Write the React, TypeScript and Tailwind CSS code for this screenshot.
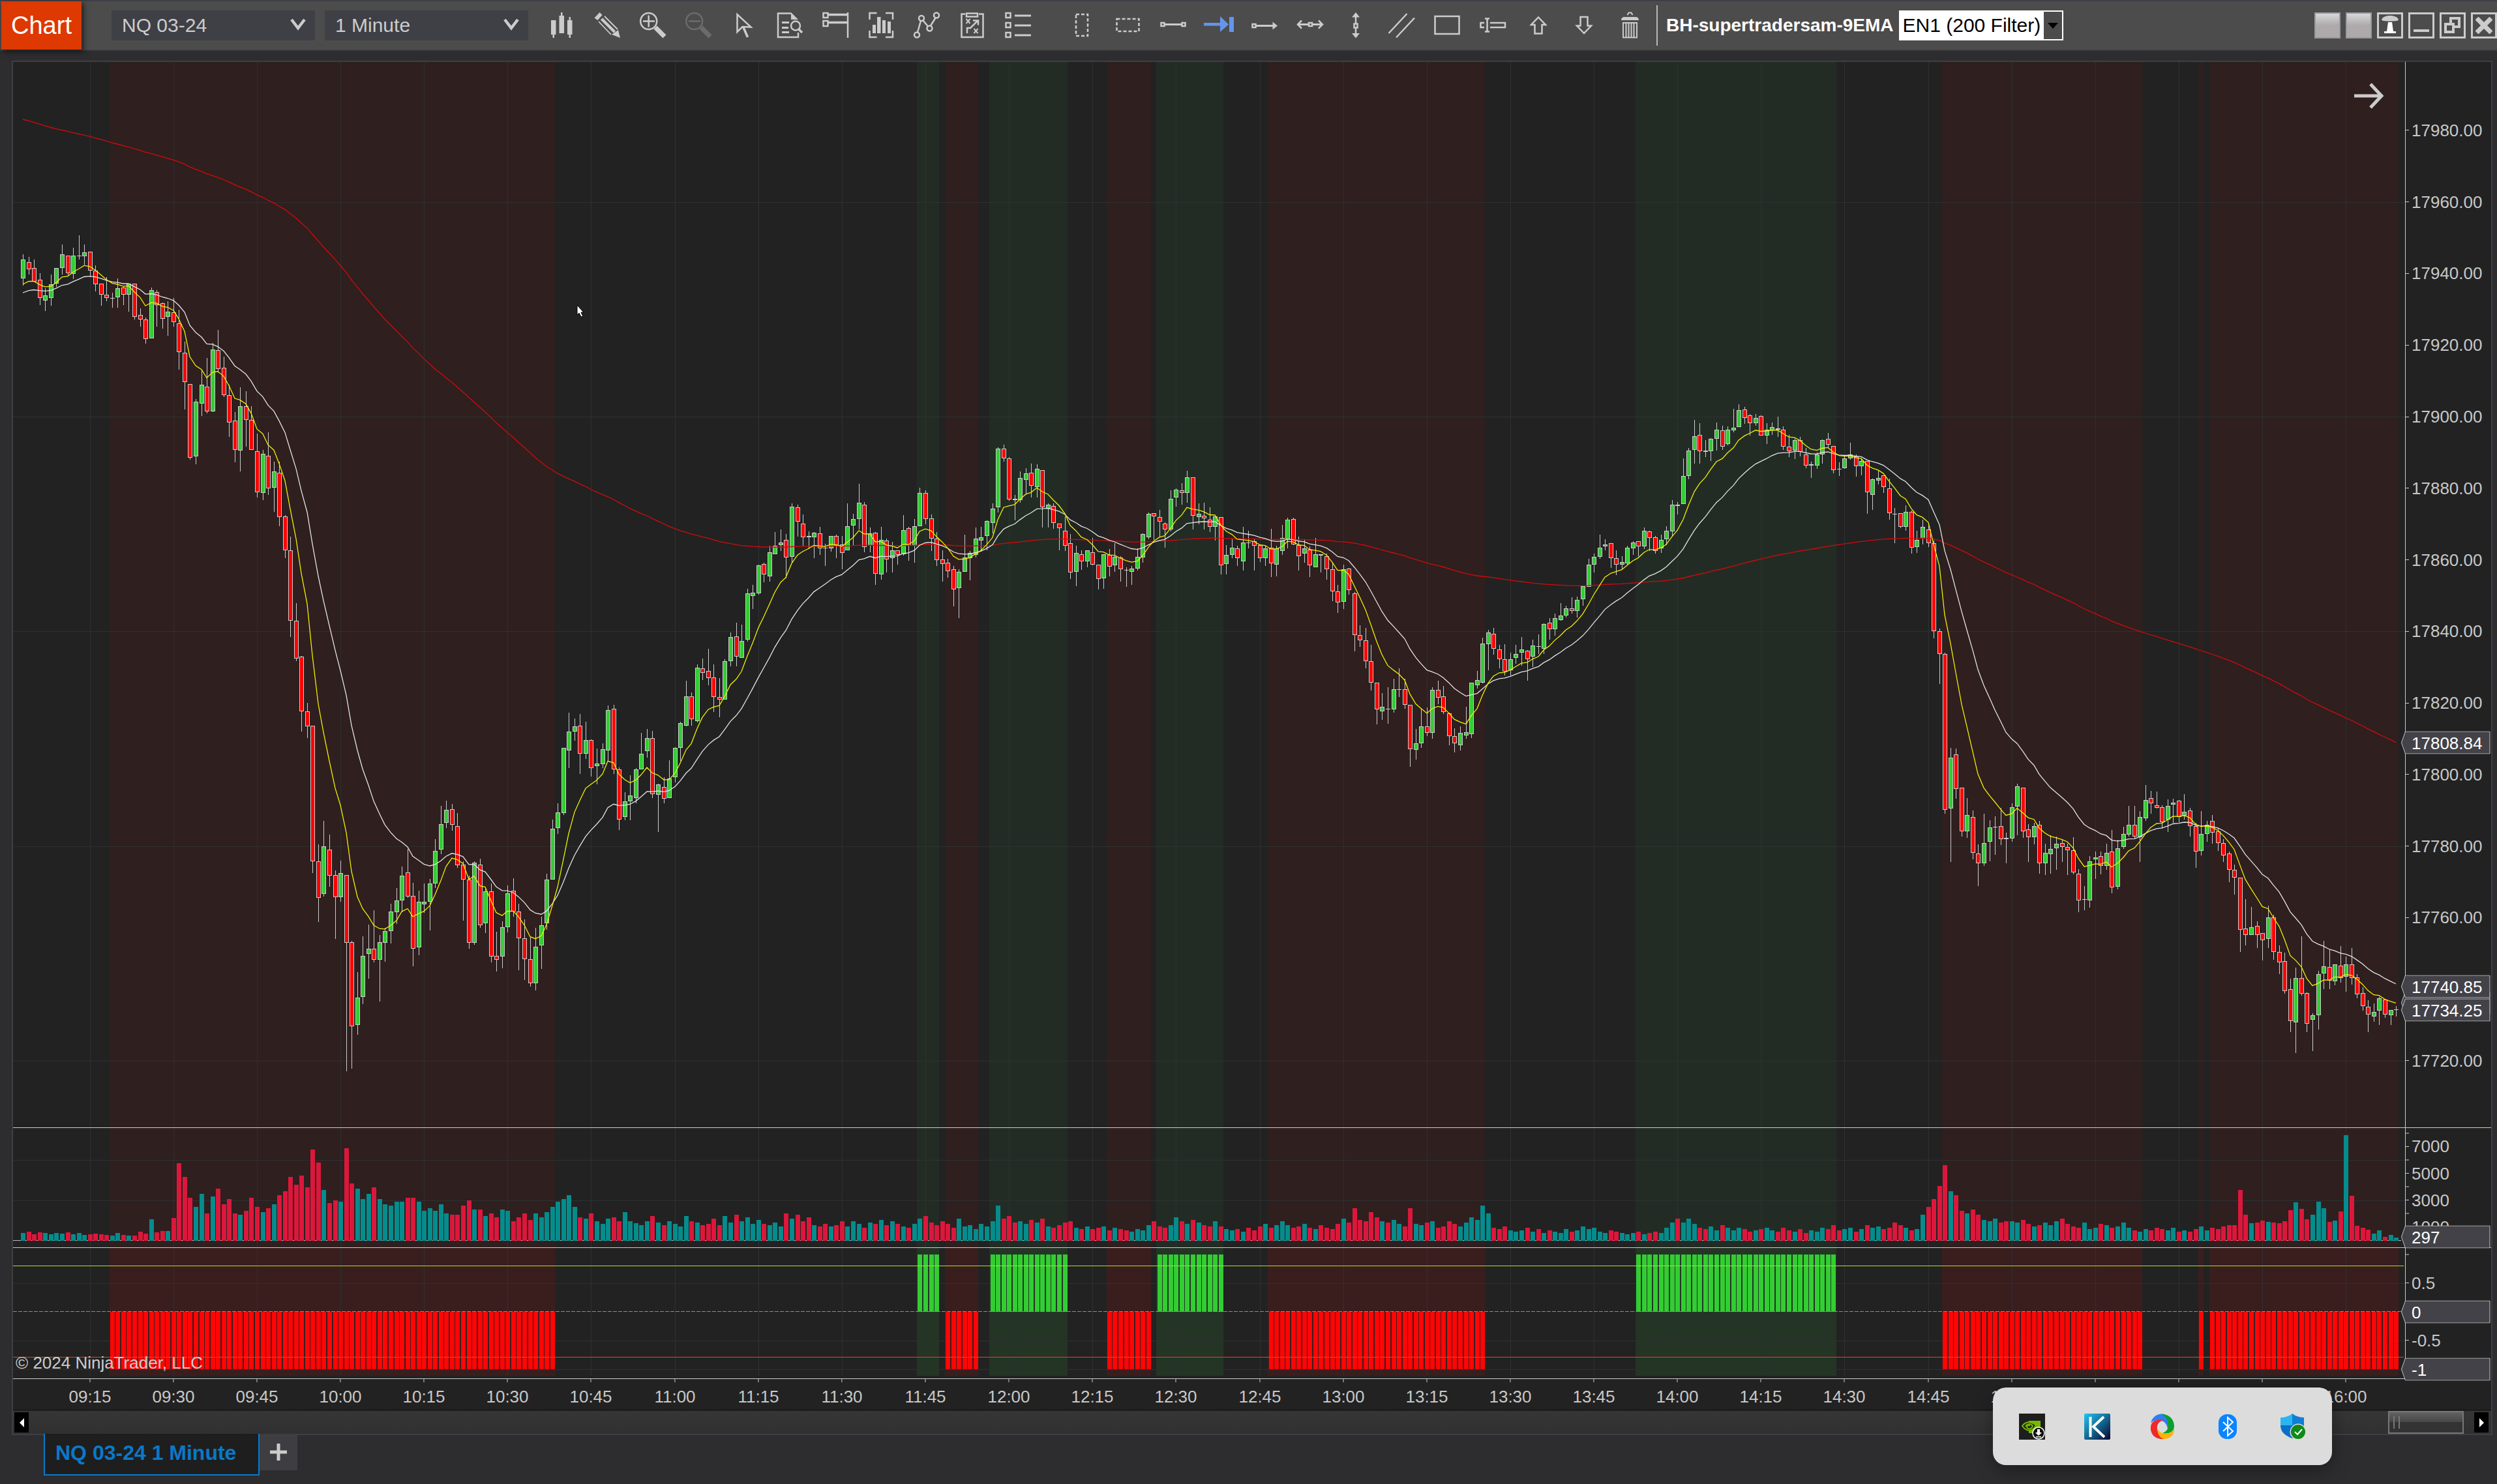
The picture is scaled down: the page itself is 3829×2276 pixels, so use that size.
import React from "react";

type Candle = { x: number; up: boolean; high: number; top: number; bottom: number; low: number };
type Run = { offset: number; scale: number; data: string };

/* Each entry is direction (g up, r down) followed by high, body top, body bottom, low. */
const RUNS: Run[] = [
  {
    offset: 340,
    scale: 0.4464,
    data: `g112,130,196,220 r122,138,163,181 r130,160,205,206 r178,200,263,287 g228,254,270,308 g182,214,261,289 g158,160,212,224 g78,113,160,182 r117,117,176,187 g90,117,180,197 g47,117,118,130 g78,106,118,148 r103,104,169,190 r149,168,214,240 r212,212,252,289 r190,252,263,273 g244,261,263,296 g196,229,259,296 r224,227,252,286 g212,212,252,310 r212,212,326,337 r298,321,337,360 r330,335,404,418 g227,236,402,402 r235,243,286,361 r278,279,333,367 g273,310,328,393 r261,312,344,361 r302,350,449,508 r412,451,552,645 r557,557,810,817 g610,619,807,833 g510,561,624,667 r468,566,651,658 g417,440,651,655 r372,442,507,516 r464,501,595,602 r561,595,691,739 r655,684,783,827 g569,635,787,858 r582,635,680,773 r635,682,783,783 r727,789,929,948 g784,798,931,956 r724,805,917,938 g825,857,914,997 r824,863,1014,1046 r1009,1013,1128,1156 r1081,1128,1370,1427 r1310,1372,1500,1510`,
  },
  {
    offset: 1000,
    scale: 0.4592,
    data: `r13,16,199,266 r169,199,249,287 r247,247,698,738 r642,698,820,902 g564,650,809,817 r609,659,746,785 r730,744,818,958 g697,739,818,833 r744,744,972,1400 r964,970,1251,1392 g1070,1155,1245,1278 g950,1014,1153,1176 g910,990,1009,1091 r862,990,1027,1036 g945,970,1027,1167 g922,931,972,1034 g841,866,931,973 g789,829,868,908 g716,746,829,868 r658,735,816,821 r771,815,990,1050 g796,835,986,1013 g774,833,842,870 g758,772,833,930 g625,665,772,789 g514,576,659,675 g497,528,570,588 r507,524,578,597 r538,582,713,721 r700,711,761,897 r746,761,972,991 g699,704,972,978 r690,711,913,921 g790,800,905,938 r773,800,1018,1036 r934,1014,1027,1067 g900,920,1018,1057 g780,805,920,937 r755,796,866,884 r841,866,957,1063 r893,955,1025,1095 r951,1025,1107,1117 g921,985,1107,1130 g884,913,979,1058 g741,761,905,927 g560,591,761,761 g505,535,587,608 g320,321,537,544 g203,265,328,388 g222,249,265,296 r207,245,339,407 g233,293,339,358 r291,295,387,416 g322,373,382,442 g304,325,374,388 g179,193,328,365 r177,190,391,407 r385,391,559,595 g468,498,552,561 g412,480,498,561 g388,391,487,505 g270,339,391,391 g257,288,330,353 r264,288,474,487 g440,443,478,602 r418,450,491,505 g362,423,487,487 g317,321,419,435 g233,238,321,363 g96,149,245,249 r136,149,225,247 g42,53,230,235 r22,55,69,94 r-10,64,88,110 r42,86,151,200 r87,151,158,218 g24,31,158,158`,
  },
  {
    offset: 660,
    scale: 0.3333,
    data: `g930,952,1063,1086 r885,949,1042,1086 g894,970,1048,1048 g729,751,962,972 g711,748,763,822 g618,622,751,756 r610,616,664,698 g532,562,673,696 g468,532,571,571 g456,517,529,554 r477,505,586,682 g336,352,583,610 r342,355,421,489 r387,430,493,531 r465,487,493,545 g468,472,493,588 r444,475,542,574 r523,539,542,624 g487,487,544,557 r480,487,532,588 r487,526,565,639 g336,442,553,553 g384,409,439,529 g246,334,409,456 r330,343,538,562 g448,475,530,562 r468,472,661,711 g444,505,664,686 r499,508,595,654 g514,553,589,655 r552,553,574,618 g390,460,571,576 r445,451,532,600 g409,442,532,609 g264,289,442,442 r276,289,409,432 r387,406,499,555 r468,499,598,624 r552,595,616,696 r592,610,649,678 r624,640,731,810 g640,652,727,864 g480,586,652,652 g556,565,587,690 g447,499,574,586 g445,493,508,558 g414,418,487,552 g336,361,427,474 g78,85,355,378 r66,85,130,144 r124,130,319,324 r298,316,322,414 g189,220,322,332 g175,199,229,290 r153,196,256,309 g156,178,262,309 r183,184,355,447 g335,343,360,447 r336,349,427,453 r430,430,451,552 r396,463,532,554 r477,520,655,684 g531,565,652,717 r552,571,604,642 g553,553,604,630 r495,562,619,622 r618,619,685,732 g570,571,682,729 r547,574,628,671 g520,583,622,652 r580,586,640,696 r630,642,644,720 g624,637,652,711 g543,583,637,645 g474,478,586,609 g378,385,493,500 r380,382,397,505 r366,400,421,490 r423,430,455,540 g276,316,455,466 g267,274,310,351 r243,277,289,342 g186,217,289,333 r217,217,394,456 g336,385,400,432 r333,394,406,456 r354,412,445,469 g396,397,445,507 r399,400,622,663 g528,574,616,663 g502,541,574,589 r532,544,589,624 g444,517,604,645 r462,517,520,543 r502,511,532,645 r525,528,587,606`,
  },
  {
    offset: 600,
    scale: 0.38265,
    data: `g620,630,670,700 r551,628,689,745 g620,630,694,742 g536,589,641,656 g506,515,592,630 r506,513,615,618 r584,618,660,719 g594,630,650,687 r622,636,699,745 g588,654,705,705 r654,654,658,727 r650,660,714,755 r686,714,803,841 r776,803,848,889 g696,714,843,873 r709,712,796,815 r805,809,978,1043 r938,978,997,1024 r949,997,1083,1111 r1017,1083,1169,1200 r1169,1169,1276,1335 g1210,1266,1282,1317 r1186,1272,1275,1333 g1152,1195,1276,1288 g1111,1194,1196,1226 r1153,1195,1258,1273 r1258,1258,1436,1505 g1355,1410,1438,1477 g1272,1342,1410,1429 r1267,1344,1370,1382 g1186,1198,1370,1393 r1160,1198,1229,1255 r1180,1224,1287,1294 r1288,1292,1383,1418 r1351,1383,1412,1448 g1342,1370,1418,1440 g1265,1368,1379,1392 g1168,1169,1374,1390 g1120,1159,1178,1192 g989,1012,1167,1172 g956,968,1013,1119 r949,973,1033,1056 r1017,1036,1073,1111 r1014,1075,1123,1139 g1048,1073,1118,1139 g1017,1054,1070,1092 g985,1036,1047,1100 r1038,1041,1073,1160 g996,1020,1063,1105 r975,1022,1024,1053 g930,934,1031,1052 r909,929,955,996 g891,910,955,980 g849,900,916,920 g860,869,898,908 r826,869,882,892 g822,837,882,907 g780,782,833,860 g672,694,785,785 g652,665,696,727 g575,626,665,672 g594,615,621,637 r610,610,670,707 r638,670,696,737 g660,686,696,716 g620,628,689,695 g601,607,629,657 r602,602,621,662 g546,560,621,632 r559,563,589,640 r580,586,641,651 g576,597,631,648 g542,560,592,618 g436,456,563,582 r445,456,461,494 g268,341,453,453 g227,239,339,353 g115,181,234,290 r128,176,241,290 r197,239,242,265 g188,192,241,280 g125,155,192,237 r139,158,221,235 g141,155,211,216 g71,147,158,165 g52,77,145,145 r63,72,106,131 r92,98,129,177 g91,106,129,138 r97,100,177,179 g127,153,177,212 g125,145,158,175 r102,148,153,182 r141,153,221,235 r176,223,241,264 g192,197,239,272 r182,195,244,262 r227,254,299,308 g282,294,299,348 g245,254,299,311 g193,195,254,290 r166,192,215,225`,
  },
  {
    offset: 600,
    scale: 0.66327,
    data: `r127,127,183,190 r164,180,181,196 g151,156,178,180 g119,146,156,158 r146,151,174,198 g155,161,174,194 r162,162,234,283 g202,203,239,274 g184,200,206,215 r195,195,222,235 r202,224,282,297 r270,283,284,351 r282,282,314,316 g264,279,313,323 r276,279,362,375 g323,344,361,374 g297,314,341,355 r304,319,352,361 r346,352,555,571 r549,555,607,677 r605,607,968,977 g825,848,965,1088 r826,840,920,942 r916,917,1018,1030 g941,980,1018,1033 r970,985,1068,1082 r1048,1069,1091,1144 g977,1045,1092,1097 g992,1009,1042,1087 g983,1007,1009,1072 r964,1006,1036,1049 r1020,1033,1036,1092 g953,962,1035,1042 g908,914,960,1026 r916,917,1018,1033 r1001,1013,1031,1089 g998,1006,1031,1048 r993,1002,1092,1116 g1047,1067,1092,1119 g1026,1059,1070,1115 g1030,1047,1057,1106 r1037,1045,1054,1088 r1047,1054,1062,1119 r1031,1062,1113,1117 r1105,1115,1177,1205 g1144,1174,1175,1200 g1075,1087,1177,1194 g1065,1078,1082,1127 r1065,1075,1098,1117 g1047,1067,1097,1107 r1015,1065,1147,1161 g1038,1057,1146,1152 g1007,1023,1054,1059 g959,1002,1025,1030 r959,1002,1030,1035 g971,985,1031,1089 g911,946,987,993 r924,941,953,977 r926,957,963,965 r957,962,996,1012 g944,959,991,1019 g942,952,956,998 r946,947,985,997 g932,973,982,990 r963,970,1006,1030 r998,1006,1065,1102 g971,1024,1063,1073 g994,1002,1023,1042 r980,993,1020,1047 r1010,1018,1045,1063 r1036,1045,1074,1089 r1065,1069,1107,1135 r1094,1107,1125,1164 r1125,1125,1246,1297 r1174,1243,1258,1282 g1193,1240,1257,1258 r1226,1237,1257,1288 r1253,1253,1269,1316 g1189,1216,1266,1288 r1210,1216,1296,1314 r1281,1296,1320,1348 r1298,1318,1387,1393 r1358,1382,1457,1482 g1333,1357,1460,1530 r1260,1357,1393,1397 r1390,1391,1463,1482 g1438,1443,1454,1526 g1340,1348,1443,1476 g1271,1330,1347,1382 r1292,1332,1363,1382 g1326,1326,1364,1374 r1283,1329,1357,1368 g1307,1325,1354,1389 r1288,1326,1357,1372 r1348,1355,1394,1404 r1378,1392,1421,1432 r1408,1424,1442,1482 g1416,1436,1446,1458 g1401,1404,1433,1466 r1406,1407,1442,1449 g1431,1431,1443,1466 g1422,1429,1430,1446`,
  },
];

const MORNING_VOLUME = `12 14 10 13 12 10 12 11 13 10 12 9 10 11 10 9 8 12 9 8 8 14 11 33 13 15 15 35
119 98 66 52 72 42 68 80 56 64 42 40 46 66 52 44 50 56 70 76 98 86 100 82 140 120 78 58 62 60 142 88 80 64 72 82 64 56 54 60 60 66 66 60 46 50 46 56 42 40 40 54 62 48 48 38 42 36 48 46 30 36 42 32 42 36 44 52 60 64 70 52 36 34
42 30 26 34 36 30 44 30 27 24 30 38 28 24 30 26 22 38 30 28 24 26 34 24 38 28 40 30 36 26 32 26 24 28 22 42 34 40 30 36 24 22 26 22 24 30 22 30 26 20 28 26 32 24 30 26 22 20 26 34 38 28 24 30 26 20 34 22 24 18
26 22 30 54 34 38 28 30 26 32 28 34 22 20 24 28 30 20 18 22 18 20 22 16 20 18 16 14 18 16 24 30 22 20 24 36 30 26 32 28 24 22 30 22 18 16 18 14 20 16 22 26 20 24 30 24 20 22 26 20 18 24 20 18 26 34 28 50 32 30
44 36 30 28 32 26 22 50 26 24 28 30 20 22 30 26 22 28 36 32 54 42 20 18 22 16 14 16 20 14 18 12 16 14 12 18 14 16 22 18 20 14 12 16 14 12 10 12 14 10 12 14 12 20 28 34 28 34 26 20 18 22 16 24 20 16 20 18 14 16
18 20 16 14 20 16 14 18 12 16 14 20 18 16 14 16`
  .split(/\s+/)
  .map(Number);

/* Bars from the afternoon sell-off through the last bar of the session. */
const AFTERNOON_VOLUME = `24 16 18 20 14 18 24 20 22 18 20 28 24 20 16 18 40 52 64 84 116 76 70 46 42 48 40 32 30 34 28 30 30 28 32 26 22 24 28 24 30 34 26 22 20
28 18 20 26 24 20 22 28 20 16 14 18 16 20 18 16 20 14 16 14 18 22 16 20 18 22 24 24 78 40 27 28 31 29 28 27 30 47 59 49 33 40 60 50 29 31 45 162 69 23 20 17 11 16 6 9 5`
  .split(/\s+/)
  .map(Number);

const barX = (i: number) => 35.2 + 8.542 * i;

const CANDLES: Candle[] = RUNS.flatMap((run) =>
  run.data.split(" ").map((entry) => {
    const [high, top, bottom, low] = entry.slice(1).split(",").map((n) => Math.round(Number(n) * run.scale + run.offset));
    return { x: 0, up: entry[0] === "g", high, top, bottom, low };
  }),
).map((c, i) => ({ ...c, x: Math.round(barX(i)) }));

const AFTERNOON_START = CANDLES.length - AFTERNOON_VOLUME.length;

const volumeAt = (i: number) => (i >= AFTERNOON_START ? AFTERNOON_VOLUME[i - AFTERNOON_START] : (MORNING_VOLUME[i] ?? 16));

function ema(period: number, seed: number) {
  const k = 2 / (period + 1);
  let value = seed;
  return CANDLES.map((c, i) => {
    if (i > 0) value += k * ((c.up ? c.top : c.bottom) - value);
    return `${c.x},${value.toFixed(1)}`;
  }).join(" ");
}

const EMA_FAST = ema(9, 436);
const EMA_MID = ema(21, 449);
const EMA_SLOW = ema(200, 183);

const ZONES = [
  { from: 16, to: 95, up: false },
  { from: 161, to: 164, up: true },
  { from: 166, to: 171, up: false },
  { from: 174, to: 187, up: true },
  { from: 195, to: 202, up: false },
  { from: 204, to: 215, up: true },
  { from: 224, to: 262, up: false },
  { from: 290, to: 325, up: true },
  { from: 345, to: 380, up: false },
  { from: 391, to: 391, up: false },
  { from: 393, to: 426, up: false },
];

const TIMES = Array.from({ length: 28 }, (_, i) => {
  const minutes = 9 * 60 + 15 + i * 15;
  const label = `${String(Math.floor(minutes / 60)).padStart(2, "0")}:${String(minutes % 60).padStart(2, "0")}`;
  return { label, x: Math.round(barX(12 + i * 15)) };
});

const priceY = (p: number) => 639 + (17900 - p) * 5.488;
const volumeY = (v: number) => 1902.5 - v * 0.0206;
const signalY = (v: number) => 2011.5 - v * 88;

const LEFT = 20;
const WIDTH = 3668;

function Backdrop({ top, height, lines, strong }: { top: number; height: number; lines: number[]; strong?: boolean }) {
  const red = strong ? "#3a1e1e" : "#2f1f1f";
  const green = strong ? "#243425" : "#232c24";
  return (
    <g shapeRendering="crispEdges">
      {ZONES.map((z) => (
        <rect
          key={z.from}
          x={Math.round(barX(z.from - 0.5))}
          y={top}
          width={Math.round(barX(z.to + 0.5)) - Math.round(barX(z.from - 0.5))}
          height={height}
          fill={z.up ? green : red}
        />
      ))}
      {TIMES.map((t) => (
        <rect key={t.label} x={t.x} y={top} width={1} height={height} fill="#2e3031" />
      ))}
      {lines.map((y) => (
        <rect key={y} x={LEFT} y={Math.round(y)} width={WIDTH} height={1} fill="#2e3031" />
      ))}
    </g>
  );
}

function Plot({ top, height, label, children }: { top: number; height: number; label: string; children: React.ReactNode }) {
  return (
    <svg
      className="block h-full w-full"
      viewBox={`${LEFT} ${top} ${WIDTH} ${height}`}
      preserveAspectRatio="none"
      role="img"
      aria-label={label}
    >
      {children}
    </svg>
  );
}

type Mark = { y: number; text?: string };

function Axis({ top, height, marks, tags }: { top: number; height: number; marks: Mark[]; tags: Mark[] }) {
  const pct = (y: number) => `${((y - top) / height) * 100}%`;
  return (
    <div className="relative border-l border-[#cccccc] text-[26px] leading-8 text-[#c8c8c8]">
      {marks.map((m) => (
        <div key={m.y} className="absolute left-0 flex -translate-y-1/2 items-center gap-1" style={{ top: pct(m.y) }}>
          <span className="h-px w-[5px] bg-[#cccccc]" />
          {m.text && <span>{m.text}</span>}
        </div>
      ))}
      {tags.map((t) => (
        <div key={t.y} className="absolute -left-[7px] right-px h-[35px] -translate-y-1/2" style={{ top: pct(t.y) }}>
          <svg className="absolute inset-0 h-full w-full" viewBox="0 0 138 35" preserveAspectRatio="none" aria-hidden="true">
            <path d="M0.5 17.5 L6.5 0.5 H137 V34.5 H6.5 Z" fill="#434248" stroke="#c4c4c4" />
          </svg>
          {t.text && <span className="relative block pl-4 leading-9 text-white">{t.text}</span>}
        </div>
      ))}
    </div>
  );
}

function Icon({ children }: { children: React.ReactNode }) {
  return (
    <svg width="40" height="40" viewBox="0 0 40 40" className="overflow-visible" fill="none" stroke="currentColor" strokeWidth="2.5" aria-hidden="true">
      {children}
    </svg>
  );
}

const solid = { fill: "currentColor", stroke: "none" };

const CHART_TOOLS: { name: string; dim?: boolean; art: React.ReactNode }[] = [
  {
    name: "Chart style",
    art: (
      <g {...solid}>
        <path d="M4 12h7.5v22H4zM16.500 5h7.500v27h-7.500zM29 12h7.500v22H29z" />
        <path d="M6.500 34H9v5H6.500zM19 0h2.500v5H19zM31.500 7H34v5h-2.500zM31.500 34H34v5h-2.500z" />
      </g>
    ),
  },
  {
    name: "Drawing tools",
    art: (
      <g>
        <path {...solid} d="M8.500 0l4 4-7 8-5-3.500zM40 39l-3-12-10 7z" />
        <path strokeWidth="1.800" d="M7 14l19 20M16 6l20 20" />
        <path strokeWidth="4.500" d="M11.500 10l20 20" />
      </g>
    ),
  },
  {
    name: "Zoom in",
    art: (
      <g>
        <circle cx="13.700" cy="13.500" r="12.500" />
        <path d="M5 13.500h18M13.700 4.500v18" />
        <path strokeWidth="7" d="M24 23l14 14" />
      </g>
    ),
  },
  {
    name: "Zoom out",
    dim: true,
    art: (
      <g>
        <circle cx="13.700" cy="13.500" r="12.500" />
        <path d="M5 13.500h18" />
        <path strokeWidth="7" d="M24 23l14 14" />
      </g>
    ),
  },
  {
    name: "Cursor",
    art: (
      <g>
        <path d="M9.500 3v27l8-8 13 .5z" />
        <path strokeWidth="3.500" d="M19 23l6.500 15" />
      </g>
    ),
  },
  {
    name: "Data box",
    art: (
      <g>
        <path d="M22 1.500H2V38h31v-7" />
        <path {...solid} d="M22 0l11 11H22z" />
        <path strokeWidth="3" d="M8 15.500h11M8 23.500h10M8 30.500h11" />
        <circle cx="29" cy="20.500" r="7" />
        <path strokeWidth="3.500" d="M33 25l6 6" />
      </g>
    ),
  },
  {
    name: "Alerts",
    art: (
      <g>
        <path d="M1.500 1h7v7h-7zM1.500 13h7v8h-7zM39 0v39" />
        <path strokeWidth="3.500" d="M9 3.500h30M9 15.500h30" />
      </g>
    ),
  },
  {
    name: "Indicators",
    art: (
      <g>
        <path d="M2.500 11V1h11M27 1h11v10M38 28v10H27M13.500 38h-11V28" />
        <path {...solid} d="M7 19h5v13H7zM14 7h5.500v25H14zM22 12h5v20h-5zM30 14h5v18h-5z" />
      </g>
    ),
  },
  {
    name: "Strategies",
    art: (
      <g>
        <circle cx="5" cy="34.500" r="4" />
        <circle cx="12" cy="9" r="4" />
        <circle cx="24.500" cy="24.500" r="4" />
        <circle cx="35" cy="4.500" r="4" />
        <path d="M6 30.500L11 13M14.500 12.500l7.500 9M26 20.500l7.500-12" />
      </g>
    ),
  },
  {
    name: "Strategy performance",
    art: (
      <g>
        <path d="M9 2.500H3.500V38h33V2.500H30" />
        <path d="M11 1.500h17v5H11zM12 32v-8h5l11-11M21 12.500h8v7" />
        <path strokeWidth="2" d="M10.500 10l6 7M16.500 10l-6 7M22.500 25l6 7M28.500 25l-6 7" />
      </g>
    ),
  },
  {
    name: "Properties",
    art: (
      <g>
        <path d="M1.500 1h7v7h-7zM1.500 16h7v7h-7zM1.500 31h7v7h-7z" />
        <path strokeWidth="3" d="M15 5h25M15 20h25M15 35h25" />
      </g>
    ),
  },
];

const DRAW_TOOLS: { name: string; active?: boolean; art: React.ReactNode }[] = [
  { name: "Vertical region", art: <path strokeDasharray="5 3" d="M11 3h18v33H11z" /> },
  { name: "Horizontal region", art: <path strokeDasharray="5 3" d="M3.500 10h34v19h-34z" /> },
  {
    name: "Line",
    art: (
      <g>
        <path d="M1.500 16h5v5h-5zM33.500 16h5v5h-5z" />
        <path strokeWidth="3" d="M7 18.500h26" />
      </g>
    ),
  },
  {
    name: "Extended right",
    active: true,
    art: <path {...solid} d="M-3 16h25V6l13 12.500L22 30V20.500H-3zM36 7h7v23h-7z" />,
  },
  {
    name: "Ray",
    art: (
      <g>
        <path d="M1.500 18h5v5h-5z" />
        <path strokeWidth="3" d="M7 20.500h26" />
        <path {...solid} d="M32.500 14.500l7.500 6-7.500 6z" />
      </g>
    ),
  },
  {
    name: "Extended line",
    art: (
      <g>
        <path d="M18 16h5v5h-5zM7 12.500l-6 6 6 6M33 12.500l6 6-6 6" />
        <path strokeWidth="3" d="M1 18.500h16M24 18.500h15" />
      </g>
    ),
  },
  {
    name: "Vertical line",
    art: (
      <g>
        <path {...solid} d="M20 0l6 7.500H14zM20 39.500l6-7.500H14z" />
        <path d="M20 7v10M20 24v8M17.500 17.500h5v6h-5z" />
      </g>
    ),
  },
  { name: "Parallel lines", art: <path d="M.5 32L28.500 2M12 38.500L40 8.500" /> },
  { name: "Rectangle", art: <path d="M1.500 6h37v27h-37z" /> },
  {
    name: "Text",
    art: (
      <g>
        <path d="M7 16H1.500v7H7M16 16h23v7H16" />
        <path d="M11.500 10v19M8 9.500h7M8 29.500h7" />
      </g>
    ),
  },
  { name: "Arrow up", art: <path d="M20 7.500L31 19h-5.500v13.500h-11V19H9z" /> },
  { name: "Arrow down", art: <path d="M20 32L9 20.500h5.500V7h11v13.500H31z" /> },
  {
    name: "Remove drawings",
    art: (
      <g>
        <path {...solid} d="M7 12c0-3 2-5 5-5h17c3 0 5 2 5 5z" />
        <path strokeWidth="2" d="M16.500 4l2-3.500h4l2 3.500M10 16h21v22.500H10zM14.500 17v21M18.500 17v21M22.500 17v21M26.500 17v21" />
      </g>
    ),
  },
];

function Chevron() {
  return (
    <svg className="pointer-events-none absolute right-3.5 top-3 h-5 w-6" viewBox="0 0 24 20" aria-hidden="true">
      <path d="M2 2l10 13L22 2" fill="none" stroke="#cccccc" strokeWidth="4.500" />
    </svg>
  );
}

function Toolbar() {
  return (
    <header className="flex h-[78px] shrink-0 items-stretch border-b-2 border-t-2 border-b-[#3d3d40] border-t-[#3f3f46] bg-[#4c4c4c] pl-0.5 text-[#cccccc]">
      <button className="mr-[46px] w-[123px] bg-[#dd3900] text-[38px] text-white shadow-[3px_3px_8px_rgba(0,0,0,0.6)]">Chart</button>
      <div className="flex items-center gap-[15px]">
        <div className="relative">
          <select aria-label="Instrument" className="h-[46px] w-[312px] appearance-none bg-[#3f3f46] pl-4 text-[30px] leading-[46px] outline-none">
            <option>NQ 03-24</option>
          </select>
          <Chevron />
        </div>
        <div className="relative">
          <select aria-label="Interval" className="h-[46px] w-[312px] appearance-none bg-[#3f3f46] pl-4 text-[30px] leading-[46px] outline-none">
            <option>1 Minute</option>
          </select>
          <Chevron />
        </div>
      </div>
      <div className="ml-4 flex">
        {CHART_TOOLS.map((t) => (
          <button key={t.name} aria-label={t.name} className={t.dim ? "grid w-[70px] place-items-center text-[#6b6b6b]" : "grid w-[70px] place-items-center"}>
            <Icon>{t.art}</Icon>
          </button>
        ))}
      </div>
      <div className="ml-7 flex">
        {DRAW_TOOLS.map((t) => (
          <button key={t.name} aria-label={t.name} className={t.active ? "grid w-[70px] place-items-center text-[#6495ed]" : "grid w-[70px] place-items-center"}>
            <Icon>{t.art}</Icon>
          </button>
        ))}
      </div>
      <div className="my-1.5 ml-1.5 w-0.5 bg-[#b8b8b8]" />
      <div className="flex items-center gap-2 pl-[13px]">
        <label htmlFor="strategy" className="text-[28px] font-bold text-white">
          BH-supertradersam-9EMA
        </label>
        <div className="relative">
          <select id="strategy" className="h-[46px] w-[252px] appearance-none bg-white pl-1.5 text-[30px] leading-[46px] text-black outline-none">
            <option>EN1 (200 Filter)</option>
          </select>
          <span className="pointer-events-none absolute inset-y-0.5 right-0.5 grid w-7 place-items-center bg-[#4c4c4c] text-black">
            <svg width="16" height="9" viewBox="0 0 16 9" aria-hidden="true">
              <path d="M0 0h16L8 9z" fill="currentColor" />
            </svg>
          </span>
        </div>
      </div>
      <div className="ml-auto flex items-center gap-2">
        <button aria-label="Link instrument" className="h-10 w-10 border-2 border-[#9a9a9e] bg-linear-to-b from-[#d8d8d8] via-[#aeaaac] to-[#aeaaac]" />
        <button aria-label="Link interval" className="h-10 w-10 border-2 border-[#9a9a9e] bg-linear-to-b from-[#d8d8d8] via-[#aeaaac] to-[#aeaaac]" />
        <button aria-label="Pin" className="grid h-10 w-10 place-items-center border-[3px] border-[#cccccc]">
          <svg width="30" height="30" viewBox="0 0 30 30" aria-hidden="true">
            <path d="M2 7C3 2 8 0 15 0s12 2 13 7c-4 2-22 2-26 0z" fill="#cccccc" />
            <path d="M12 10h6l2 14h4v3H6v-3h4z" fill="#ffffff" />
          </svg>
        </button>
        <button aria-label="Minimize" className="grid h-10 w-10 place-items-center border-[3px] border-[#cccccc]">
          <span className="mt-4 h-1 w-6 bg-[#cccccc]" />
        </button>
        <button aria-label="Restore" className="grid h-10 w-10 place-items-center border-[3px] border-[#cccccc]">
          <svg width="26" height="26" viewBox="0 0 26 26" fill="none" stroke="#cccccc" strokeWidth="4" aria-hidden="true">
            <path d="M2 11h12v12H2zM10 9V2h13v13h-7" />
          </svg>
        </button>
        <button aria-label="Close" className="grid h-10 w-10 place-items-center border-[3px] border-[#cccccc]">
          <svg width="26" height="26" viewBox="0 0 26 26" stroke="#cccccc" strokeWidth="7" aria-hidden="true">
            <path d="M2 2l22 22M24 2L2 24" />
          </svg>
        </button>
      </div>
    </header>
  );
}

function PricePane() {
  const top = 95;
  const height = 1634;
  const ticks = Array.from({ length: 14 }, (_, i) => 17980 - i * 20);
  return (
    <div className="grid min-h-0 grid-cols-[minmax(0,1fr)_132px]">
      <div className="relative min-h-0">
        <Plot top={top} height={height} label="NQ 03-24 price">
          <Backdrop top={top} height={height} lines={[17960, 17900, 17840, 17780, 17720].map(priceY)} />
          <g shapeRendering="crispEdges">
            {CANDLES.map((c) => (
              <g key={c.x}>
                <rect x={c.x} y={c.high} width={1} height={c.low - c.high} fill="#cccccc" />
                <rect x={c.x - 3} y={c.top} width={7} height={Math.max(1, c.bottom - c.top)} fill="#cccccc" />
                <rect x={c.x - 2} y={c.top + 1} width={5} height={Math.max(0, c.bottom - c.top - 2)} fill={c.up ? "#32cd32" : "#ff0000"} />
              </g>
            ))}
          </g>
          <g fill="none" strokeWidth="1.300">
            <polyline points={EMA_SLOW} stroke="#d20a0a" />
            <polyline points={EMA_MID} stroke="#e4e4e4" />
            <polyline points={EMA_FAST} stroke="#f0f000" />
          </g>
          <path d="M885 468v15l3-3 3 6 3-1-3-6h4z" fill="#ffffff" stroke="#000000" />
        </Plot>
        <button aria-label="Scroll to latest bar" className="absolute right-8 top-8 text-[#cccccc]">
          <svg width="46" height="40" viewBox="0 0 46 40" fill="none" stroke="currentColor" strokeWidth="5" aria-hidden="true">
            <path d="M0 20h42M25 2l17 18-17 18" />
          </svg>
        </button>
      </div>
      <Axis
        top={top}
        height={height}
        marks={ticks.map((p) => ({ y: priceY(p), text: `${p}.00` }))}
        tags={[
          { y: 1138.5, text: "17808.84" },
          { y: 1538 },
          { y: 1512.5, text: "17740.85" },
          { y: 1548.5, text: "17734.25" },
        ]}
      />
    </div>
  );
}

function VolumePane() {
  const top = 1730;
  const height = 183;
  return (
    <div className="grid min-h-0 grid-cols-[minmax(0,1fr)_132px] border-t border-[#cccccc]">
      <Plot top={top} height={height} label="Volume">
        <Backdrop top={top} height={height} lines={[6000, 3000].map(volumeY)} />
        <g shapeRendering="crispEdges">
          <rect x={LEFT} y={1902} width={WIDTH - 6} height={1} fill="#bbbbbb" />
          {CANDLES.map((c, i) => (
            <rect key={c.x} x={c.x - 3} y={1903 - volumeAt(i)} width={7} height={volumeAt(i)} fill={c.up ? "#058c8c" : "#dc173c"} />
          ))}
        </g>
      </Plot>
      <Axis
        top={top}
        height={height}
        marks={[8000, 7000, 6000, 5000, 4000, 3000, 2000, 1000].map((v) => ({ y: volumeY(v), text: v % 2000 ? String(v) : undefined }))}
        tags={[{ y: 1896.5, text: "297" }]}
      />
    </div>
  );
}

function SignalPane() {
  const top = 1914;
  const height = 200;
  return (
    <div className="grid min-h-0 grid-cols-[minmax(0,1fr)_132px] border-t border-[#cccccc]">
      <Plot top={top} height={height} label="Trend signal">
        <Backdrop top={top} height={196} lines={[0.5, -0.5, -1].map(signalY)} strong />
        <g shapeRendering="crispEdges">
          {ZONES.flatMap((z) =>
            CANDLES.slice(z.from, z.to + 1).map((c) => (
              <rect key={c.x} x={c.x - 3} y={z.up ? 1924 : 2012} width={7} height={88} fill={z.up ? "#32cd32" : "#ff0505"} />
            )),
          )}
          <rect x={LEFT} y={1941} width={WIDTH - 2} height={1} fill="#a8e02c" />
          <rect x={LEFT} y={2081} width={WIDTH - 2} height={1} fill="#e04a14" />
          <line x1={LEFT} x2={LEFT + WIDTH - 6} y1={2011.5} y2={2011.5} stroke="#8c8c8c" strokeDasharray="6 2" />
        </g>
      </Plot>
      <Axis
        top={top}
        height={height}
        marks={[{ y: signalY(1) }, { y: signalY(0.5), text: "0.5" }, { y: signalY(-0.5), text: "-0.5" }]}
        tags={[
          { y: 2011.5, text: "0" },
          { y: 2099.5, text: "-1" },
        ]}
      />
    </div>
  );
}

function TimeAxis() {
  return (
    <div className="grid h-[50px] shrink-0 grid-cols-[minmax(0,1fr)_132px] border-b-[3px] border-[#1d1d1d] text-[26px] leading-8 text-[#c8c8c8]">
      <div className="relative border-t border-[#cccccc]">
        {TIMES.map((t) => (
          <div key={t.label} className="absolute top-0 flex -translate-x-1/2 flex-col items-center gap-1.5" style={{ left: `${((t.x - LEFT) / WIDTH) * 100}%` }}>
            <span className="h-[5px] w-px bg-[#cccccc]" />
            <span>{t.label}</span>
          </div>
        ))}
      </div>
      <div />
    </div>
  );
}

function ScrollRow() {
  return (
    <div className="flex h-[35px] shrink-0 items-stretch bg-linear-to-b from-[#363636] to-[#303030] px-0.5 py-0.5">
      <button aria-label="Scroll left" className="grid w-[22px] place-items-center bg-black">
        <svg width="7" height="14" viewBox="0 0 7 14" aria-hidden="true">
          <path d="M7 0v14L0 7z" fill="#ffffff" />
        </svg>
      </button>
      <div className="-my-0.5 ml-auto mr-4 flex w-[116px] gap-1.5 border-2 border-[#787878] bg-linear-to-b from-[#626262] via-[#464646] via-50% to-[#333333] to-50% px-1.5 py-1.5">
        <span className="w-0.5 bg-[#777777]" />
        <span className="w-0.5 bg-[#777777]" />
      </div>
      <button aria-label="Scroll right" className="mr-0.5 grid w-[22px] place-items-center bg-black">
        <svg width="7" height="14" viewBox="0 0 7 14" aria-hidden="true">
          <path d="M0 0v14l7-7z" fill="#ffffff" />
        </svg>
      </button>
    </div>
  );
}

function Tray() {
  return (
    <div className="absolute bottom-[29px] right-[253px] flex h-[119px] items-center gap-[60px] rounded-[20px] bg-[#dcdcdc] px-10 shadow-[0_8px_28px_rgba(0,0,0,0.35)]">
      <button aria-label="NVIDIA" className="h-10 w-10">
        <svg viewBox="0 0 40 40" aria-hidden="true">
          <rect width="40" height="40" fill="#1e1e1e" />
          <path d="M15 11h18v19H15z" fill="#76b900" />
          <path d="M5 19c5-7 13-8 21-1-4 8-13 12-21 1z" fill="#1e1e1e" stroke="#76b900" strokeWidth="2" />
          <path d="M10 20c2-5 8-5 11-1-2 5-7 6-9 2 0-3 3-4 5-2" fill="none" stroke="#76b900" strokeWidth="2" />
          <circle cx="30" cy="30" r="9" fill="#111111" stroke="#ffffff" strokeWidth="1.500" />
          <path d="M28 24h4v5h3l-5 5-5-5h3zM26 35h8v1.500h-8z" fill="#ffffff" />
        </svg>
      </button>
      <button aria-label="K" className="h-10 w-10">
        <svg viewBox="0 0 40 40" aria-hidden="true">
          <defs>
            <linearGradient id="k-fill" x1="0" y1="0" x2="1" y2="1">
              <stop offset="0" stopColor="#22c4f4" />
              <stop offset="0.500" stopColor="#146a92" />
              <stop offset="1" stopColor="#0a0430" />
            </linearGradient>
          </defs>
          <rect width="40" height="40" rx="2" fill="url(#k-fill)" />
          <path d="M9.500 5v31M30 5L14 20l17 16" fill="none" stroke="#ffffff" strokeWidth="4" />
        </svg>
      </button>
      <button aria-label="Color wheel" className="h-10 w-10">
        <svg viewBox="0 0 40 40" aria-hidden="true">
          <path d="M2 15C4 5 13-1 23 1c8 4 9 12 5 22C26 14 22 11 14 10 8 10 4 12 2 15z" fill="#2f7df4" />
          <path d="M18 1c12-1 20 8 20 18 0 9-8 13-18 11 8-3 10-9 8-17-1-6-5-10-10-12z" fill="#0ba02c" />
          <path d="M38 22c1 10-7 18-17 17-8 0-10-8-9-16 4 7 10 9 18 7 4-1 7-4 8-8z" fill="#fbb406" />
          <path d="M22 39C8 40 1 31 2 20c1-9 9-12 20-10-8 2-11 7-10 15 1 7 4 12 10 14z" fill="#ee2a2a" />
        </svg>
      </button>
      <button aria-label="Bluetooth" className="h-10 w-10">
        <svg viewBox="0 0 40 40" aria-hidden="true">
          <rect x="6" y="1" width="28" height="38" rx="13" fill="#0a84ff" />
          <path d="M13 13l15 14-8 7V6l8 7-15 14" fill="none" stroke="#ffffff" strokeWidth="2" />
        </svg>
      </button>
      <button aria-label="Security" className="h-10 w-10">
        <svg viewBox="0 0 40 40" aria-hidden="true">
          <path d="M1 6c7 0 13-2 18-6 5 4 11 6 18 6v12H1z" fill="#2bb5f0" />
          <path d="M19 0c5 4 11 6 18 6v12H19z" fill="#0f7ed4" />
          <path d="M1 18h18v20C8 34 1 28 1 18z" fill="#0a6fc8" />
          <path d="M19 18h18c0 10-7 16-18 20z" fill="#0a5cb0" />
          <circle cx="28" cy="28" r="12.500" fill="#dcdcdc" />
          <circle cx="28" cy="28" r="11" fill="#0e8a16" />
          <path d="M23 28l4 4 7-8" fill="none" stroke="#ffffff" strokeWidth="2" />
        </svg>
      </button>
    </div>
  );
}

export default function App() {
  return (
    <div className="relative flex h-screen flex-col overflow-hidden bg-[#2d2d30] font-['Liberation_Sans',Arial,sans-serif]">
      <Toolbar />
      <main className="mx-[7px] ml-[18px] mt-[15px] flex min-h-0 flex-1 flex-col border-2 border-[#3f3f43] bg-[#222222]">
        <div className="relative grid min-h-0 flex-1 grid-rows-[1634fr_184fr_201fr]">
          <PricePane />
          <VolumePane />
          <SignalPane />
          <p className="absolute bottom-2 left-1 text-[26px] leading-8 text-[#cccccc]">© 2024 NinjaTrader, LLC</p>
        </div>
        <TimeAxis />
        <ScrollRow />
      </main>
      <footer className="-mt-0.5 flex h-[77px] shrink-0 items-start pl-[67px]">
        <button className="h-16 w-[331px] border-2 border-t-0 border-[#0b78c8] bg-[#1e1e1e] pl-4 pb-1 text-left text-[32px] font-bold text-[#0b78c8]">NQ 03-24 1 Minute</button>
        <button aria-label="Add tab" className="grid h-14 w-[58px] place-items-center bg-[#3e3d42] text-[#cccccc]">
          <svg width="26" height="26" viewBox="0 0 26 26" stroke="currentColor" strokeWidth="5" aria-hidden="true">
            <path d="M0 13h26M13 0v26" />
          </svg>
        </button>
      </footer>
      <Tray />
    </div>
  );
}
